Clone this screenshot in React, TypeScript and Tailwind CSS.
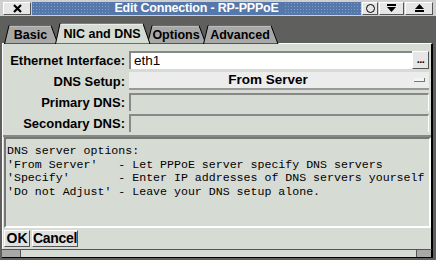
import React from "react";

const Tab = ({ label, active, w }: { label: string; active?: boolean; w: number }) => (
  <div className={`relative flex items-center justify-center ${active ? "h-[22px] z-10" : "h-[20px]"} -mr-[4px]`} style={{ width: w }}>
    <svg className="absolute inset-0" width={w} height={active ? 22 : 20} viewBox={`0 0 ${w} ${active ? 22 : 20}`} preserveAspectRatio="none">
      <polygon
        points={`0.5,${active ? 22 : 20} 5,1.5 ${w - 8},1.5 ${w - 1},${active ? 22 : 20}`}
        fill={active ? "#d6dbd4" : "#a8a8a8"}
        stroke="#000"
        strokeWidth="1"
      />
      <line x1="5.5" y1="2" x2={w - 8} y2="2" stroke={active ? "#ffffff" : "#d0d0d0"} />
    </svg>
    <span className="relative text-[12.5px] font-bold text-black pt-[2px] -ml-[2px]">{label}</span>
  </div>
);

const Row = ({ label, children }: { label: string; children: React.ReactNode }) => (
  <div className="flex items-center h-[18px] mb-[3px] pr-[2px]">
    <div className="w-[126px] text-right pr-[4px] text-[13px] font-bold text-black leading-none">{label}</div>
    <div className="flex-1 flex h-full">{children}</div>
  </div>
);

export default function App() {
  return (
    <div
      className="w-[436px] h-[260px] bg-[#5f605e] flex flex-col overflow-hidden"
      style={{ fontFamily: '"Liberation Sans", Arial, sans-serif' }}
    >
      {/* title bar */}
      <div className="h-[17px] bg-[#cfcfcf] flex items-center px-[3px] gap-[1px] border-b border-[#5f605e]">
        <div className="w-[28px] h-[13px] bg-[#e6e6e6] border border-t-white border-l-white border-r-[#555] border-b-[#555] flex items-center justify-center">
          <svg width="9" height="9" viewBox="0 0 9 9">
            <path d="M1 1 L8 8 M8 1 L1 8" stroke="#000" strokeWidth="2.2" />
          </svg>
        </div>
        <div
          className="flex-1 h-[13px] flex items-center justify-center"
          style={{
            backgroundColor: "#5577aa",
            backgroundImage: "radial-gradient(#7f9dcc 0.7px, transparent 0.8px)",
            backgroundSize: "3px 3px",
          }}
        >
          <span className="bg-[#5577aa] px-[5px] text-white font-bold text-[12.5px] leading-none tracking-[-0.2px]">
            Edit Connection - RP-PPPoE
          </span>
        </div>
        <div className="w-[16px] h-[13px] bg-[#e6e6e6] border border-t-white border-l-white border-r-[#555] border-b-[#555] flex items-center justify-center">
          <div className="w-[9px] h-[9px] rounded-full border border-black" />
        </div>
        <div className="w-[25px] h-[13px] bg-[#e6e6e6] border border-t-white border-l-white border-r-[#555] border-b-[#555] flex items-center justify-center">
          <svg width="9" height="8" viewBox="0 0 9 8">
            <rect x="0" y="0" width="9" height="2" fill="#000" />
            <polygon points="0,3 9,3 4.5,8" fill="#000" />
          </svg>
        </div>
        <div className="w-[28px] h-[13px] bg-[#e6e6e6] border border-t-white border-l-white border-r-[#555] border-b-[#555] flex items-center justify-center">
          <svg width="9" height="8" viewBox="0 0 9 8">
            <polygon points="0,5 9,5 4.5,0" fill="#000" />
            <rect x="0" y="6" width="9" height="2" fill="#000" />
          </svg>
        </div>
      </div>

      {/* tabs */}
      <div className="h-[27px] flex items-end pl-[4px]">
        <Tab label="Basic" w={55} />
        <Tab label="NIC and DNS" w={96} active />
        <Tab label="Options" w={60} />
        <Tab label="Advanced" w={76} />
      </div>

      {/* panel */}
      <div className="mx-[2px] mr-[3px] -mt-[1px] bg-[#d6dbd4] border-t border-l border-t-white border-l-white border-r-2 border-r-black flex flex-col pt-[7px]">
        <Row label="Ethernet Interface:">
          <div className="flex-1 bg-white border-t-2 border-l-2 border-t-[#888] border-l-[#888] flex items-center pl-[3px] text-[13.5px] text-black">
            eth1
          </div>
          <div className="w-[17px] bg-[#e6e6e6] border border-t-white border-l-white border-r-[#555] border-b-[#555] flex items-end justify-center pb-[3px]">
            <span className="text-[11px] font-bold leading-none tracking-[-0.5px]">...</span>
          </div>
        </Row>
        <Row label="DNS Setup:">
          <div className="flex-1 bg-[#ececec] border-b-2 border-b-[#999] flex items-center relative pr-[22px]">
            <span className="flex-1 text-center text-[13.5px] font-bold text-black">From Server</span>
            <div className="absolute right-[4px] top-[6px] w-[11px] h-[4px] bg-[#f4f4f4] border-b border-r border-[#777]" />
          </div>
        </Row>
        <Row label="Primary DNS:">
          <div className="flex-1 bg-[#d6dbd4] border-t-2 border-l-2 border-t-[#888] border-l-[#888] border-r border-r-white" />
        </Row>
        <Row label="Secondary DNS:">
          <div className="flex-1 bg-[#d6dbd4] border-t-2 border-l-2 border-t-[#888] border-l-[#888] border-r border-r-white" />
        </Row>

        <div className="border-t-2 border-t-[#888]">
          <div
            className="ml-[1px] h-[91px] border-t-2 border-l-2 border-t-[#777] border-l-[#777] border-b-2 border-r-2 border-b-white border-r-white bg-[#d6dbd4] pl-[1px] pt-[5px] text-[11.6px] leading-[13.5px] text-black whitespace-pre overflow-hidden"
            style={{ fontFamily: '"Liberation Mono", "Courier New", monospace' }}
          >
            {"DNS server options:\n'From Server'   - Let PPPoE server specify DNS servers\n'Specify'       - Enter IP addresses of DNS servers yourself\n'Do not Adjust' - Leave your DNS setup alone."}
          </div>
        </div>

        <div className="flex gap-[2px] pl-[1px] pt-[2px] pb-[2px] h-[21px]">
          <div className="w-[26px] bg-[#e0e0e0] border border-t-white border-l-white border-r-[#555] border-b-[#555] flex items-center justify-center text-[14px] font-bold">
            OK
          </div>
          <div className="w-[46px] bg-[#e0e0e0] border border-t-white border-l-white border-r-[#555] border-b-[#555] flex items-center justify-center text-[14px] font-bold tracking-[-0.3px]">
            Cancel
          </div>
        </div>
      </div>

      {/* bottom strip */}
      <div className="mx-[2px] mr-[3px] h-[9px] bg-[#d6dbd4] border-t border-t-[#555] border-r-2 border-r-black border-b border-b-black flex">
        <div className="w-[18px] bg-[#a8a8a8]" />
        <div className="flex-1 border-l border-l-[#555]" />
        <div className="w-[15px] bg-[#a8a8a8] border-l border-l-[#555]" />
      </div>
      <div className="flex-1 bg-[#5f605e]" />
    </div>
  );
}
